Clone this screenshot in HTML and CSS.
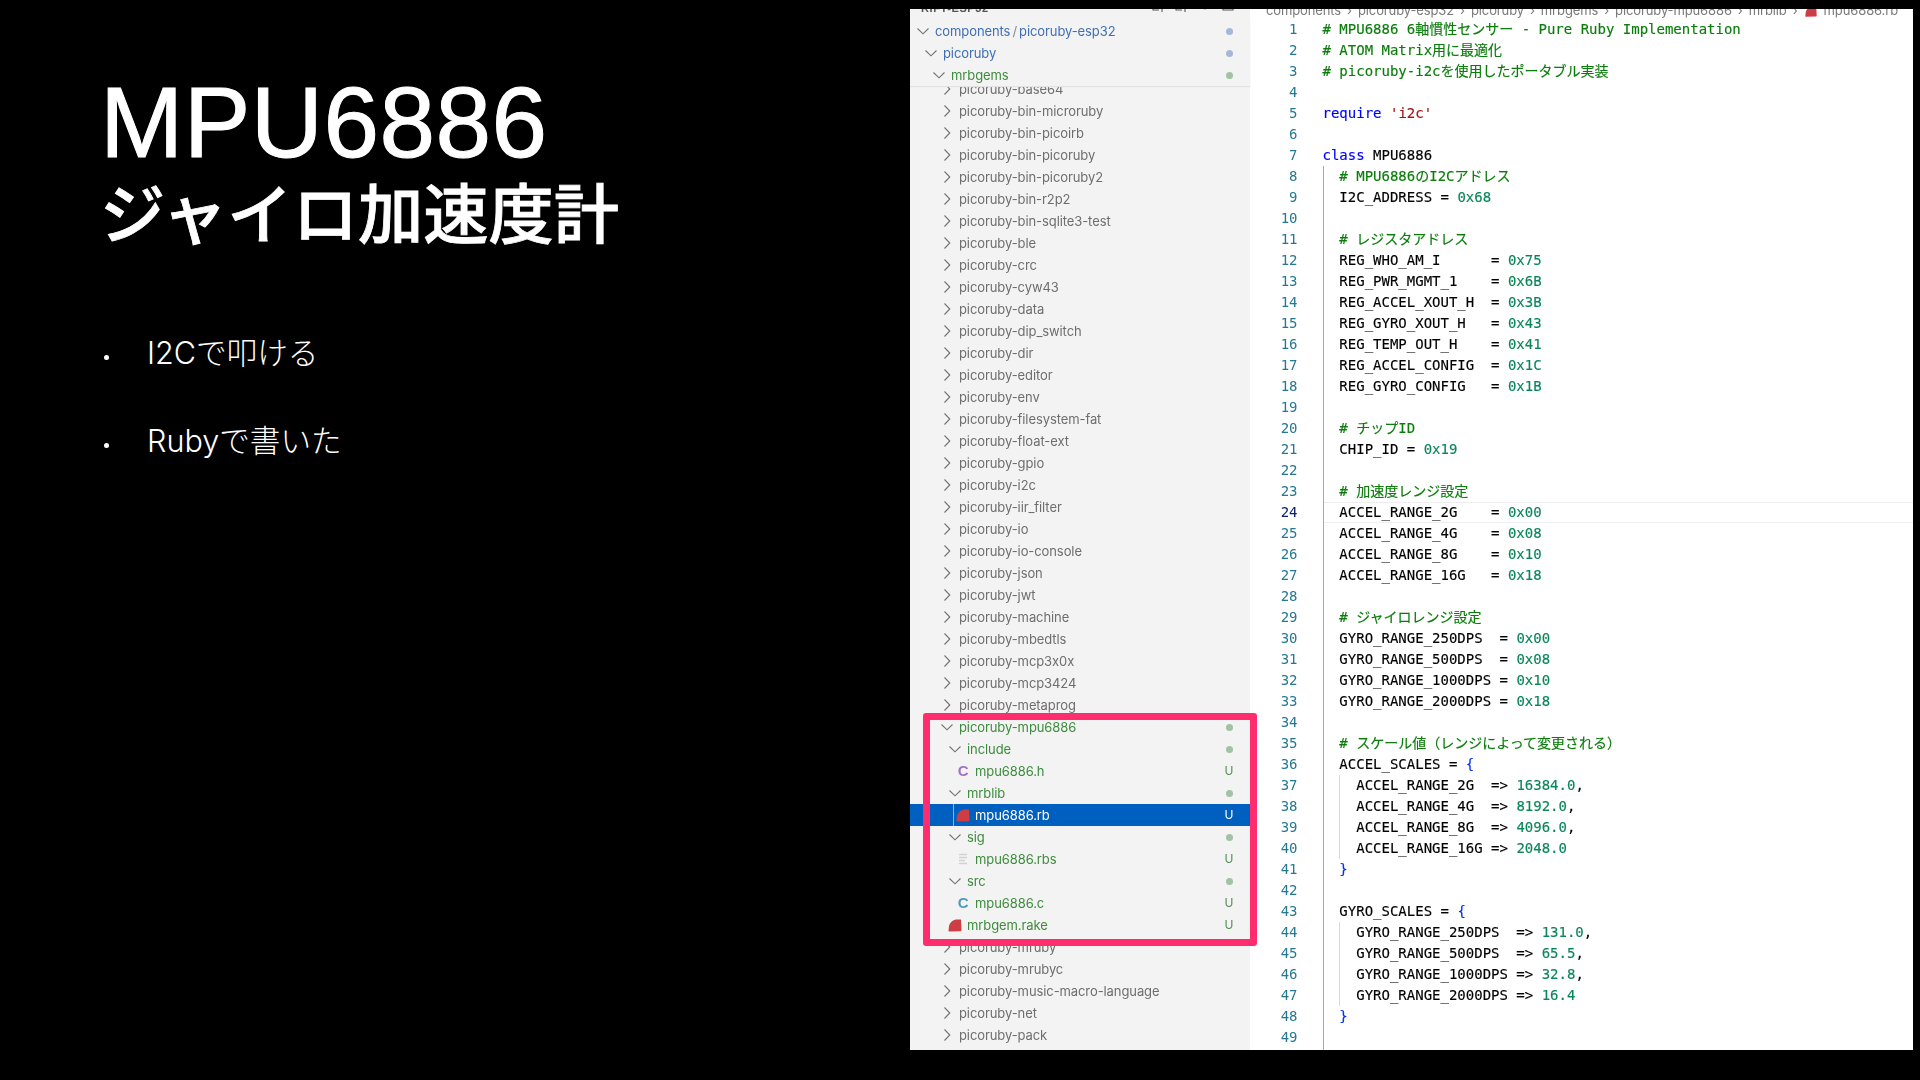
FILE: index.html
```html
<!DOCTYPE html>
<html lang="ja">
<head>
<meta charset="utf-8">
<title>MPU6886</title>
<link rel="stylesheet" href="styles.css">
</head>
<body>
<svg class="defs" width="0" height="0" aria-hidden="true">
  <symbol id="cr" viewBox="0 0 16 16"><path d="M5.5 2.5 10.8 8 5.5 13.5" fill="none" stroke="currentColor" stroke-width="1.1"/></symbol>
  <symbol id="cd" viewBox="0 0 16 16"><path d="M2.5 5.5 8 10.8 13.5 5.5" fill="none" stroke="currentColor" stroke-width="1.1"/></symbol>
  <symbol id="rb" viewBox="0 0 16 16"><path d="M1.5 14 2 9C3 5.5 6 3 9 2.6L14 2.5 14.5 13C14.5 13.8 14 14.3 13 14.3L2 14.5Z" fill="#cc3e44"/></symbol>
  <symbol id="ln" viewBox="0 0 16 16"><path d="M4 3.5h8M4 6.5h8M4 9.5h6M4 12.5h8" fill="none" stroke="#d0d4d0" stroke-width="1.3"/></symbol>
</svg>
<main class="slide">
  <section class="copy">
    <h1 class="title">MPU6886</h1>
    <h2 class="subtitle">ジャイロ加速度計</h2>
    <ul class="points">
      <li>I2Cで叩ける</li>
      <li>Rubyで書いた</li>
    </ul>
  </section>
  <section class="shot">
    <aside class="side">
      <div class="side-head">
        <span class="head-name">RIFT-ESP32</span>
        <span class="head-acts">
          <svg viewBox="0 0 16 16"><path d="M2 1v10h6M11 5v8M7 9h8" fill="none" stroke="#555" stroke-width="1.1"/></svg>
          <svg viewBox="0 0 16 16"><path d="M2 1v10h6M11 5v8M7 9h8" fill="none" stroke="#555" stroke-width="1.1"/></svg>
          <svg viewBox="0 0 16 16"><path d="M2.5 3a5.6 5.6 0 1 0 11 0" fill="none" stroke="#555" stroke-width="1.1"/></svg>
          <svg viewBox="0 0 16 16"><path d="M3 1v10h10V1M6 7h4" fill="none" stroke="#555" stroke-width="1.1"/></svg>
        </span>
      </div>
      <div class="sticky">
        <div class="row l0 blue"><svg class="ic"><use href="#cd"/></svg><span>components<span class="sl">/</span>picoruby-esp32</span><i class="dot dblue"></i></div>
        <div class="row l1 blue"><svg class="ic"><use href="#cd"/></svg><span>picoruby</span><i class="dot dblue"></i></div>
        <div class="row l2 green"><svg class="ic"><use href="#cd"/></svg><span>mrbgems</span><i class="dot"></i></div>
      </div>
      <div class="tree">
        <div class="tree-in">
          <div class="row l3"><svg class="ic"><use href="#cr"/></svg><span>picoruby-base64</span></div>
          <div class="row l3"><svg class="ic"><use href="#cr"/></svg><span>picoruby-bin-microruby</span></div>
          <div class="row l3"><svg class="ic"><use href="#cr"/></svg><span>picoruby-bin-picoirb</span></div>
          <div class="row l3"><svg class="ic"><use href="#cr"/></svg><span>picoruby-bin-picoruby</span></div>
          <div class="row l3"><svg class="ic"><use href="#cr"/></svg><span>picoruby-bin-picoruby2</span></div>
          <div class="row l3"><svg class="ic"><use href="#cr"/></svg><span>picoruby-bin-r2p2</span></div>
          <div class="row l3"><svg class="ic"><use href="#cr"/></svg><span>picoruby-bin-sqlite3-test</span></div>
          <div class="row l3"><svg class="ic"><use href="#cr"/></svg><span>picoruby-ble</span></div>
          <div class="row l3"><svg class="ic"><use href="#cr"/></svg><span>picoruby-crc</span></div>
          <div class="row l3"><svg class="ic"><use href="#cr"/></svg><span>picoruby-cyw43</span></div>
          <div class="row l3"><svg class="ic"><use href="#cr"/></svg><span>picoruby-data</span></div>
          <div class="row l3"><svg class="ic"><use href="#cr"/></svg><span>picoruby-dip_switch</span></div>
          <div class="row l3"><svg class="ic"><use href="#cr"/></svg><span>picoruby-dir</span></div>
          <div class="row l3"><svg class="ic"><use href="#cr"/></svg><span>picoruby-editor</span></div>
          <div class="row l3"><svg class="ic"><use href="#cr"/></svg><span>picoruby-env</span></div>
          <div class="row l3"><svg class="ic"><use href="#cr"/></svg><span>picoruby-filesystem-fat</span></div>
          <div class="row l3"><svg class="ic"><use href="#cr"/></svg><span>picoruby-float-ext</span></div>
          <div class="row l3"><svg class="ic"><use href="#cr"/></svg><span>picoruby-gpio</span></div>
          <div class="row l3"><svg class="ic"><use href="#cr"/></svg><span>picoruby-i2c</span></div>
          <div class="row l3"><svg class="ic"><use href="#cr"/></svg><span>picoruby-iir_filter</span></div>
          <div class="row l3"><svg class="ic"><use href="#cr"/></svg><span>picoruby-io</span></div>
          <div class="row l3"><svg class="ic"><use href="#cr"/></svg><span>picoruby-io-console</span></div>
          <div class="row l3"><svg class="ic"><use href="#cr"/></svg><span>picoruby-json</span></div>
          <div class="row l3"><svg class="ic"><use href="#cr"/></svg><span>picoruby-jwt</span></div>
          <div class="row l3"><svg class="ic"><use href="#cr"/></svg><span>picoruby-machine</span></div>
          <div class="row l3"><svg class="ic"><use href="#cr"/></svg><span>picoruby-mbedtls</span></div>
          <div class="row l3"><svg class="ic"><use href="#cr"/></svg><span>picoruby-mcp3x0x</span></div>
          <div class="row l3"><svg class="ic"><use href="#cr"/></svg><span>picoruby-mcp3424</span></div>
          <div class="row l3"><svg class="ic"><use href="#cr"/></svg><span>picoruby-metaprog</span></div>
          <div class="row l3 green"><svg class="ic"><use href="#cd"/></svg><span>picoruby-mpu6886</span><i class="dot"></i></div>
          <div class="row l4 green"><svg class="ic"><use href="#cd"/></svg><span>include</span><i class="dot"></i></div>
          <div class="row l5 green"><b class="cfile purple">C</b><span>mpu6886.h</span><i class="u">U</i></div>
          <div class="row l4 green"><svg class="ic"><use href="#cd"/></svg><span>mrblib</span><i class="dot"></i></div>
          <div class="row l5 selected"><svg class="ic"><use href="#rb"/></svg><span>mpu6886.rb</span><i class="u">U</i></div>
          <div class="row l4 green"><svg class="ic"><use href="#cd"/></svg><span>sig</span><i class="dot"></i></div>
          <div class="row l5 green"><svg class="ic"><use href="#ln"/></svg><span>mpu6886.rbs</span><i class="u">U</i></div>
          <div class="row l4 green"><svg class="ic"><use href="#cd"/></svg><span>src</span><i class="dot"></i></div>
          <div class="row l5 green"><b class="cfile cyan">C</b><span>mpu6886.c</span><i class="u">U</i></div>
          <div class="row l4 green"><svg class="ic"><use href="#rb"/></svg><span>mrbgem.rake</span><i class="u">U</i></div>
          <div class="row l3"><svg class="ic"><use href="#cr"/></svg><span>picoruby-mruby</span></div>
          <div class="row l3"><svg class="ic"><use href="#cr"/></svg><span>picoruby-mrubyc</span></div>
          <div class="row l3"><svg class="ic"><use href="#cr"/></svg><span>picoruby-music-macro-language</span></div>
          <div class="row l3"><svg class="ic"><use href="#cr"/></svg><span>picoruby-net</span></div>
          <div class="row l3"><svg class="ic"><use href="#cr"/></svg><span>picoruby-pack</span></div>
        </div>
      </div>
    </aside>
    <div class="editor">
      <div class="crumbs">
        <span>components</span><s>›</s><span>picoruby-esp32</span><s>›</s><span>picoruby</span><s>›</s><span>mrbgems</span><s>›</s><span>picoruby-mpu6886</span><s>›</s><span>mrblib</span><s>›</s><svg class="crumb-ic"><use href="#rb"/></svg><span>mpu6886.rb</span>
      </div>
      <div class="code-wrap">
        <div class="gutter"><div>1</div><div>2</div><div>3</div><div>4</div><div>5</div><div>6</div><div>7</div><div>8</div><div>9</div><div>10</div><div>11</div><div>12</div><div>13</div><div>14</div><div>15</div><div>16</div><div>17</div><div>18</div><div>19</div><div>20</div><div>21</div><div>22</div><div>23</div><div class="cur">24</div><div>25</div><div>26</div><div>27</div><div>28</div><div>29</div><div>30</div><div>31</div><div>32</div><div>33</div><div>34</div><div>35</div><div>36</div><div>37</div><div>38</div><div>39</div><div>40</div><div>41</div><div>42</div><div>43</div><div>44</div><div>45</div><div>46</div><div>47</div><div>48</div><div>49</div></div>
        <div class="code">
          <div class="ln c"># MPU6886 6軸慣性センサー - Pure Ruby Implementation</div>
          <div class="ln c"># ATOM Matrix用に最適化</div>
          <div class="ln c"># picoruby-i2cを使用したポータブル実装</div>
          <div class="ln"> </div>
          <div class="ln"><em class="k">require</em> <em class="s">'i2c'</em></div>
          <div class="ln"> </div>
          <div class="ln"><em class="k">class</em> MPU6886</div>
          <div class="block">
            <div class="ln c"># MPU6886のI2Cアドレス</div>
            <div class="ln">I2C_ADDRESS = <em class="n">0x68</em></div>
            <div class="ln"> </div>
            <div class="ln c"># レジスタアドレス</div>
            <div class="ln">REG_WHO_AM_I      = <em class="n">0x75</em></div>
            <div class="ln">REG_PWR_MGMT_1    = <em class="n">0x6B</em></div>
            <div class="ln">REG_ACCEL_XOUT_H  = <em class="n">0x3B</em></div>
            <div class="ln">REG_GYRO_XOUT_H   = <em class="n">0x43</em></div>
            <div class="ln">REG_TEMP_OUT_H    = <em class="n">0x41</em></div>
            <div class="ln">REG_ACCEL_CONFIG  = <em class="n">0x1C</em></div>
            <div class="ln">REG_GYRO_CONFIG   = <em class="n">0x1B</em></div>
            <div class="ln"> </div>
            <div class="ln c"># チップID</div>
            <div class="ln">CHIP_ID = <em class="n">0x19</em></div>
            <div class="ln"> </div>
            <div class="ln c"># 加速度レンジ設定</div>
            <div class="ln active">ACCEL_RANGE_2G    = <em class="n">0x00</em></div>
            <div class="ln">ACCEL_RANGE_4G    = <em class="n">0x08</em></div>
            <div class="ln">ACCEL_RANGE_8G    = <em class="n">0x10</em></div>
            <div class="ln">ACCEL_RANGE_16G   = <em class="n">0x18</em></div>
            <div class="ln"> </div>
            <div class="ln c"># ジャイロレンジ設定</div>
            <div class="ln">GYRO_RANGE_250DPS  = <em class="n">0x00</em></div>
            <div class="ln">GYRO_RANGE_500DPS  = <em class="n">0x08</em></div>
            <div class="ln">GYRO_RANGE_1000DPS = <em class="n">0x10</em></div>
            <div class="ln">GYRO_RANGE_2000DPS = <em class="n">0x18</em></div>
            <div class="ln"> </div>
            <div class="ln c"># スケール値（レンジによって変更される）</div>
            <div class="ln">ACCEL_SCALES = <em class="b">{</em></div>
            <div class="block inner">
              <div class="ln">ACCEL_RANGE_2G  =&gt; <em class="n">16384.0</em>,</div>
              <div class="ln">ACCEL_RANGE_4G  =&gt; <em class="n">8192.0</em>,</div>
              <div class="ln">ACCEL_RANGE_8G  =&gt; <em class="n">4096.0</em>,</div>
              <div class="ln">ACCEL_RANGE_16G =&gt; <em class="n">2048.0</em></div>
            </div>
            <div class="ln"><em class="b">}</em></div>
            <div class="ln"> </div>
            <div class="ln">GYRO_SCALES = <em class="b">{</em></div>
            <div class="block inner">
              <div class="ln">GYRO_RANGE_250DPS  =&gt; <em class="n">131.0</em>,</div>
              <div class="ln">GYRO_RANGE_500DPS  =&gt; <em class="n">65.5</em>,</div>
              <div class="ln">GYRO_RANGE_1000DPS =&gt; <em class="n">32.8</em>,</div>
              <div class="ln">GYRO_RANGE_2000DPS =&gt; <em class="n">16.4</em></div>
            </div>
            <div class="ln"><em class="b">}</em></div>
            <div class="ln"> </div>
            <div class="ln"> </div>
          </div>
        </div>
      </div>
    </div>
    <div class="mark"></div>
  </section>
</main>
</body>
</html>
```
FILE: styles.css
```css
* { box-sizing: border-box; }
html, body { margin: 0; height: 100%; background: #000; }
.defs { position: absolute; }
.slide {
  display: flex;
  width: 1920px;
  height: 1080px;
  overflow: hidden;
  background: #000;
  color: #fff;
}

/* left copy */
.copy { width: 910px; padding: 69px 0 0 100px; flex: none; }
.title {
  margin: 0;
  font: 400 100px/106px "Liberation Sans", sans-serif;
  letter-spacing: 0.4px;
  -webkit-text-stroke: 1px #fff;
}
.subtitle {
  margin: -4px 0 0;
  font: 500 65.3px/78px "Noto Sans CJK JP", sans-serif;
  -webkit-text-stroke: 0.8px #fff;
}
.points {
  list-style: none;
  margin: 82px 0 0;
  padding: 0 0 0 47px;
  font: 300 30.6px/44px "Inter", "Noto Sans CJK JP", sans-serif;
  display: flex;
  flex-direction: column;
  gap: 44px;
}
.points li { position: relative; }
.points li::before {
  content: "";
  position: absolute;
  left: -43px;
  top: 24px;
  width: 5px;
  height: 5px;
  border-radius: 50%;
  background: #fff;
}

/* screenshot */
.shot {
  position: relative;
  display: flex;
  width: 1003px;
  height: 1041px;
  margin-top: 9px;
  overflow: hidden;
  filter: blur(0.35px);
}
.side {
  width: 340px;
  flex: none;
  display: flex;
  flex-direction: column;
  background: #f3f3f3;
  font: 400 13px/22px "Inter", "Liberation Sans", sans-serif;
  font-feature-settings: "calt" 0;
  letter-spacing: -0.09px;
  color: #6e6e6e;
}
.side-head {
  height: 11px;
  flex: none;
  overflow: hidden;
  position: relative;
  display: flex;
  justify-content: space-between;
  padding: 0 14px 0 11px;
}
.head-name {
  margin-top: -5px;
  font: 700 11px/8px "Liberation Sans", sans-serif;
  letter-spacing: 0.6px;
  color: #555;
}
.head-acts { display: flex; gap: 7px; margin-top: -10px; }
.head-acts svg { width: 16px; height: 16px; }
.sticky {
  flex: none;
  box-shadow: 0 1px 1px #e2e2e2;
  position: relative;
  z-index: 1;
  background: #f3f3f3;
}
.tree { flex: 1; overflow: hidden; }
.tree-in { margin-top: -8px; }
.row {
  display: flex;
  align-items: center;
  height: 22px;
  padding-right: 15px;
  white-space: nowrap;
}
.row > span { flex: none; }
.l0 { padding-left: 5px; }
.l1 { padding-left: 13px; }
.l2 { padding-left: 21px; }
.l3 { padding-left: 29px; }
.l4 { padding-left: 37px; }
.l5 { padding-left: 45px; }
.ic { width: 16px; height: 16px; margin-right: 4px; flex: none; color: #727272; }
.blue { color: #3f6fb5; }
.green { color: #3e8b3e; }
.sl { margin: 0 2px; color: #8a8a8a; }
.dot {
  margin-left: auto;
  margin-right: 2.5px;
  width: 7px;
  height: 7px;
  border-radius: 50%;
  background: #a3c2a3;
  flex: none;
}
.dblue { background: #a6b8d8; }
.u {
  margin-left: auto;
  width: 12px;
  text-align: center;
  font-style: normal;
  font-size: 12px;
  color: #4e8f4e;
}
.cfile {
  width: 16px;
  margin-right: 4px;
  flex: none;
  text-align: center;
  font: 700 15px/22px "Liberation Sans", sans-serif;
}
.purple { color: #a074c4; }
.cyan { color: #519aba; }
.selected {
  background: #0060c0;
  color: #fff;
  position: relative;
}
.selected .u { color: #fff; }
.selected::before {
  content: "";
  position: absolute;
  left: 43px;
  top: 0;
  bottom: 0;
  width: 1px;
  background: #8fb3dc;
}

/* editor */
.editor {
  flex: none;
  width: 663px;
  background: #fff;
  display: flex;
  flex-direction: column;
  overflow: hidden;
}
.crumbs {
  height: 9.6px;
  flex: none;
  overflow: hidden;
  display: flex;
  align-items: flex-end;
  gap: 6px;
  padding-left: 16px;
  font: 400 13px/11px "Inter", "Liberation Sans", sans-serif;
  letter-spacing: -0.12px;
  color: #7a7a7a;
  white-space: nowrap;
}
.crumbs span { position: relative; top: -3px; flex: none; }
.crumbs s { text-decoration: none; flex: none; position: relative; top: -3px; }
.crumb-ic { width: 14px; height: 14px; flex: none; margin-bottom: 1px; }
.code-wrap { flex: 1; display: flex; overflow: hidden; }
.gutter {
  width: 47.5px;
  flex: none;
  text-align: right;
  color: #237893;
  font: 400 14px/21px "DejaVu Sans Mono", monospace;
  margin-right: 25px;
}
.gutter .cur { color: #0b216f; }
.code {
  flex: 1;
  min-width: 0;
  font: 400 14px/21px "DejaVu Sans Mono", "Noto Sans CJK JP", monospace;
  color: #000;
  -webkit-text-stroke: 0.15px currentColor;
}
.ln { height: 21px; white-space: pre; }
.ln em { font-style: normal; }
.c { color: #0a7d0a; }
.k { color: #0000ff; }
.s { color: #a31515; }
.n { color: #098658; }
.b { color: #0431fa; }
.block {
  border-left: 1px solid #a9a9a9;
  padding-left: 15.86px;
}
.block.inner { border-left-color: #d9d9d9; }
.active {
  margin-left: -15.86px;
  padding-left: 15.86px;
  box-shadow: inset 0 1px #eeeeee, inset 0 -1px #eeeeee;
}

/* highlight */
.mark {
  position: absolute;
  left: 13px;
  top: 704px;
  width: 334px;
  height: 233px;
  border: 7px solid #ff2d6e;
  border-radius: 3px;
}
```
